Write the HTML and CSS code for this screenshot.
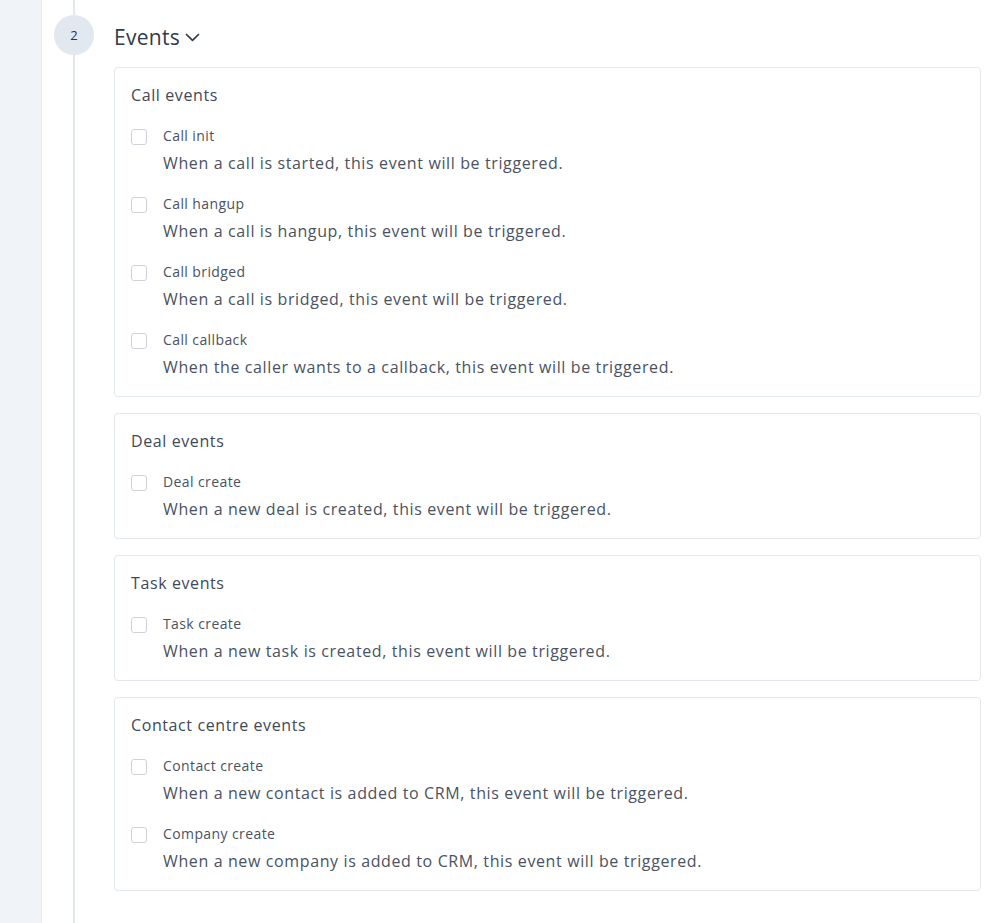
FILE: index.html
```html
<!DOCTYPE html>
<html>
<head>
<meta charset="utf-8">
<link rel="stylesheet" href="styles.css">
</head>
<body>
<div class="sidebar"></div>
<div class="main">
  <div class="timeline">
    <div class="line-top"></div>
    <div class="step">2</div>
    <div class="line-bottom"></div>
  </div>
  <div class="content">
    <div class="header">
      <span class="header-title">Events</span>
      <svg class="chevron" width="15" height="9" viewBox="0 0 15 9"><polyline points="1.5,1.5 7.5,7.3 13.5,1.5" fill="none" stroke="#2f3a4a" stroke-width="1.7" stroke-linecap="round" stroke-linejoin="round"/></svg>
    </div>
    <div class="cards">
      <div class="card">
        <div class="card-title">Call events</div>
        <div class="items">
          <div class="item"><span class="box"></span><div class="texts"><div class="label">Call init</div><div class="desc">When a call is started, this event will be triggered.</div></div></div>
          <div class="item"><span class="box"></span><div class="texts"><div class="label">Call hangup</div><div class="desc">When a call is hangup, this event will be triggered.</div></div></div>
          <div class="item"><span class="box"></span><div class="texts"><div class="label">Call bridged</div><div class="desc">When a call is bridged, this event will be triggered.</div></div></div>
          <div class="item"><span class="box"></span><div class="texts"><div class="label">Call callback</div><div class="desc">When the caller wants to a callback, this event will be triggered.</div></div></div>
        </div>
      </div>
      <div class="card">
        <div class="card-title">Deal events</div>
        <div class="items">
          <div class="item"><span class="box"></span><div class="texts"><div class="label">Deal create</div><div class="desc">When a new deal is created, this event will be triggered.</div></div></div>
        </div>
      </div>
      <div class="card">
        <div class="card-title">Task events</div>
        <div class="items">
          <div class="item"><span class="box"></span><div class="texts"><div class="label">Task create</div><div class="desc">When a new task is created, this event will be triggered.</div></div></div>
        </div>
      </div>
      <div class="card">
        <div class="card-title">Contact centre events</div>
        <div class="items">
          <div class="item"><span class="box"></span><div class="texts"><div class="label">Contact create</div><div class="desc">When a new contact is added to CRM, this event will be triggered.</div></div></div>
          <div class="item"><span class="box"></span><div class="texts"><div class="label">Company create</div><div class="desc">When a new company is added to CRM, this event will be triggered.</div></div></div>
        </div>
      </div>
    </div>
  </div>
</div>
</body>
</html>
```
FILE: styles.css
```css
html, body {
  margin: 0;
  padding: 0;
  background: #ffffff;
}
body {
  display: flex;
  min-height: 923px;
  font-family: "Open Sans", "Noto Sans", sans-serif;
  color: #434c5b;
}
.sidebar {
  width: 41px;
  background: #f0f3f8;
  border-right: 1px solid #e8ecf2;
  flex-shrink: 0;
}
.main {
  flex: 1;
  display: flex;
  padding-left: 12px;
  padding-right: 3px;
}
.timeline {
  width: 40px;
  display: flex;
  flex-direction: column;
  align-items: center;
  flex-shrink: 0;
}
.line-top {
  width: 2px;
  height: 15px;
  background: #e2e8f0;
}
.line-bottom {
  width: 2px;
  flex: 1;
  background: #e2e8f0;
}
.step {
  width: 40px;
  height: 40px;
  border-radius: 50%;
  background: #e2e8f0;
  display: flex;
  align-items: center;
  justify-content: center;
  font-size: 13px;
  color: #2d3443;
}
.content {
  flex: 1;
  margin-left: 20px;
  padding-top: 15px;
}
.header {
  height: 40px;
  display: flex;
  align-items: center;
  padding-top: 3px;
  box-sizing: border-box;
  gap: 5px;
}
.header-title {
  font-size: 21px;
  letter-spacing: 0.3px;
  color: #2f3a4a;
}
.chevron {
  margin-top: 1px;
}
.cards {
  margin-top: 12px;
  display: flex;
  flex-direction: column;
  gap: 16px;
}
.card {
  border: 1px solid #e3e7ee;
  border-radius: 4px;
  padding: 16px 16px 18px 16px;
}
.card-title {
  font-size: 16px;
  letter-spacing: 0.6px;
  line-height: 22px;
  color: #3f4857;
}
.items {
  margin-top: 20px;
  display: flex;
  flex-direction: column;
  gap: 20px;
}
.item {
  display: flex;
  gap: 16px;
}
.box {
  width: 16px;
  height: 16px;
  box-sizing: border-box;
  border: 1px solid #cdd2da;
  border-radius: 3px;
  margin-top: 3px;
  flex-shrink: 0;
}
.texts {
  display: flex;
  flex-direction: column;
  gap: 6px;
}
.label {
  font-size: 14px;
  letter-spacing: 0.4px;
  line-height: 20px;
  color: #4a5261;
}
.desc {
  font-size: 16px;
  letter-spacing: 0.62px;
  line-height: 22px;
  color: #4a5261;
}
```
